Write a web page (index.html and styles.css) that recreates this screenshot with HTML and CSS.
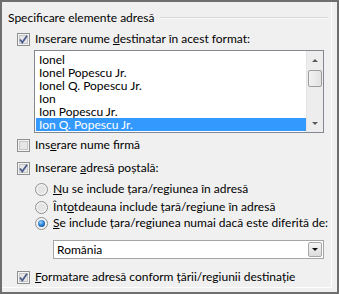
FILE: index.html
```html
<!DOCTYPE html>
<html lang="ro">
<head>
    <meta charset="UTF-8">
    <title>Specificare elemente adresă</title>
    <link rel="stylesheet" href="styles.css">
</head>
<body>
    <div class="dialog">
        <div class="group">
            <div class="group-title">
                <span>Specificare elemente adresă</span>
                <span class="rule"></span>
            </div>

            <!-- Nume destinatar -->
            <div class="row row-name">
                <svg class="check" width="13" height="13" viewBox="0 0 13 13">
                    <rect x="0.5" y="0.5" width="12" height="12" fill="#f4f4f4" stroke="#8e8f8f"/>
                    <rect x="2.5" y="2.5" width="8" height="8" fill="#e6e6e6" stroke="#c6c6c6"/>
                    <path d="M3 6.5 L5.3 9.5 L10 2.8" fill="none" stroke="#4a5c8c" stroke-width="1.8"/>
                </svg>
                <span>Inserare nume <u>d</u>estinatar în acest format:</span>
            </div>

            <div class="listbox">
                <ul class="items">
                    <li>Ionel</li>
                    <li>Ionel Popescu Jr.</li>
                    <li>Ionel Q. Popescu Jr.</li>
                    <li>Ion</li>
                    <li>Ion Popescu Jr.</li>
                    <li class="selected">Ion Q. Popescu Jr.</li>
                </ul>
                <div class="scrollbar">
                    <span class="arrow arrow-up"></span>
                    <span class="thumb"></span>
                    <span class="arrow arrow-down"></span>
                </div>
            </div>

            <!-- Nume firma -->
            <div class="row row-firm">
                <svg class="check" width="13" height="13" viewBox="0 0 13 13">
                    <rect x="0.5" y="0.5" width="12" height="12" fill="#f4f4f4" stroke="#8e8f8f"/>
                    <rect x="2.5" y="2.5" width="8" height="8" fill="#e6e6e6" stroke="#c6c6c6"/>
                </svg>
                <span>Ins<u>e</u>rare nume firmă</span>
            </div>

            <!-- Adresa postala -->
            <div class="row row-postal">
                <svg class="check" width="13" height="13" viewBox="0 0 13 13">
                    <rect x="0.5" y="0.5" width="12" height="12" fill="#f4f4f4" stroke="#8e8f8f"/>
                    <rect x="2.5" y="2.5" width="8" height="8" fill="#e6e6e6" stroke="#c6c6c6"/>
                    <path d="M3 6.5 L5.3 9.5 L10 2.8" fill="none" stroke="#4a5c8c" stroke-width="1.8"/>
                </svg>
                <span>Inserare <u>a</u>dresă poștală:</span>
            </div>

            <div class="options">
                <div class="row radio-row">
                    <svg class="radio" width="13" height="13" viewBox="0 0 13 13">
                        <circle cx="6.5" cy="6.5" r="6" fill="#f2f2f2" stroke="#8e8f8f"/>
                        <circle cx="6.5" cy="6.5" r="4" fill="#e4e4e4"/>
                    </svg>
                    <span><u>N</u>u se include țara/regiunea în adresă</span>
                </div>
                <div class="row radio-row">
                    <svg class="radio" width="13" height="13" viewBox="0 0 13 13">
                        <circle cx="6.5" cy="6.5" r="6" fill="#f2f2f2" stroke="#8e8f8f"/>
                        <circle cx="6.5" cy="6.5" r="4" fill="#e4e4e4"/>
                    </svg>
                    <span>Înt<u>o</u>tdeauna include țară/regiune în adresă</span>
                </div>
                <div class="row radio-row">
                    <svg class="radio" width="13" height="13" viewBox="0 0 13 13">
                        <defs>
                            <radialGradient id="dot" cx="0.4" cy="0.35" r="0.7">
                                <stop offset="0" stop-color="#9fd3f7"/>
                                <stop offset="0.6" stop-color="#2a7fd4"/>
                                <stop offset="1" stop-color="#1a4f96"/>
                            </radialGradient>
                        </defs>
                        <circle cx="6.5" cy="6.5" r="6" fill="#f2f2f2" stroke="#8e8f8f"/>
                        <circle cx="6.5" cy="6.5" r="3.5" fill="url(#dot)"/>
                    </svg>
                    <span><u>S</u>e include țara/regiunea numai dacă este diferită de:</span>
                </div>

                <div class="select">
                    <span class="select-value">România</span>
                    <span class="select-button"><span class="arrow arrow-down"></span></span>
                </div>
            </div>

            <!-- Formatare -->
            <div class="row row-format">
                <svg class="check" width="13" height="13" viewBox="0 0 13 13">
                    <rect x="0.5" y="0.5" width="12" height="12" fill="#f4f4f4" stroke="#8e8f8f"/>
                    <rect x="2.5" y="2.5" width="8" height="8" fill="#e6e6e6" stroke="#c6c6c6"/>
                    <path d="M3 6.5 L5.3 9.5 L10 2.8" fill="none" stroke="#4a5c8c" stroke-width="1.8"/>
                </svg>
                <span><u>F</u>ormatare adresă conform țării/regiunii destinație</span>
            </div>
        </div>
    </div>
</body>
</html>
```

FILE: styles.css
```css
body {
    margin: 0;
    font-family: Lato, "Noto Sans", sans-serif;
    font-size: 12px;
    color: #000000;
}

.dialog {
    width: 339px;
    height: 294px;
    box-sizing: border-box;
    border: 2px solid #6f6f6f;
    background-color: #f0f0f0;
}

.group {
    width: 330px;
    height: 286px;
    box-sizing: border-box;
    padding: 8px 0 0 6px;
    border-right: 1px solid #fdfdfd;
    border-bottom: 1px solid #fdfdfd;
}

.group-title {
    display: flex;
    align-items: center;
    height: 16px;
    line-height: 16px;
}

.rule {
    flex: 1;
    margin: 0 3px 0 6px;
    height: 0;
    border-top: 1px solid #d8d8d8;
    border-bottom: 1px solid #fbfbfb;
}

.row {
    display: flex;
    align-items: center;
    height: 16px;
    line-height: 16px;
    white-space: nowrap;
}

.row svg {
    flex: none;
    margin-right: 5px;
}

.row-name {
    margin: 5px 0 0 9px;
}

.row-firm {
    margin: 4px 0 0 9px;
}

.row-postal {
    margin: 7px 0 0 9px;
}

.row-format {
    margin: 10px 0 0 9px;
}

/* list of name formats */
.listbox {
    display: flex;
    width: 290px;
    height: 83px;
    margin: 3px 0 0 26px;
    box-sizing: border-box;
    border: 1px solid #828790;
    background-color: #ffffff;
}

.items {
    flex: 1;
    list-style: none;
    margin: 0;
    padding: 2px 0 0 1px;
}

.items li {
    height: 13px;
    line-height: 13px;
    padding-left: 3px;
}

.items li.selected {
    background-color: #3399ff;
    color: #ffffff;
}

.scrollbar {
    position: relative;
    width: 16px;
    background-color: #ededed;
    border-left: 1px solid #e4e4e4;
}

.thumb {
    position: absolute;
    left: 1px;
    top: 19px;
    width: 12px;
    height: 15px;
    border: 1px solid #9d9d9d;
    border-radius: 2px;
    background: linear-gradient(to right, #f2f2f2, #e2e2e2);
}

.arrow {
    position: absolute;
    width: 0;
    height: 0;
    border-left: 3px solid transparent;
    border-right: 3px solid transparent;
}

.arrow-up {
    left: 5px;
    top: 8px;
    border-bottom: 3px solid #5a5a5a;
}

.arrow-down {
    left: 5px;
    bottom: 7px;
    border-top: 3px solid #5a5a5a;
}

/* postal address options */
.options {
    margin-left: 27px;
}

.radio-row {
    margin-top: 2px;
}

.options .radio-row:first-child {
    margin-top: 5px;
}

.options .radio-row:nth-child(3) {
    margin-top: 0;
}

.select {
    display: flex;
    align-items: center;
    width: 271px;
    height: 19px;
    margin: 9px 0 0 18px;
    box-sizing: border-box;
    border: 1px solid #a5a5a5;
    background-color: #ffffff;
}

.select-value {
    flex: 1;
    padding-left: 3px;
    line-height: 17px;
}

.select-button {
    position: relative;
    width: 14px;
    height: 15px;
    margin-right: 1px;
    box-sizing: border-box;
    border: 1px solid #a7a7a7;
    border-radius: 2px;
    background: linear-gradient(#f5f5f5, #dcdcdc);
}

.select-button .arrow-down {
    left: 3px;
    top: 5px;
    bottom: auto;
    border-top-color: #111111;
}
```
